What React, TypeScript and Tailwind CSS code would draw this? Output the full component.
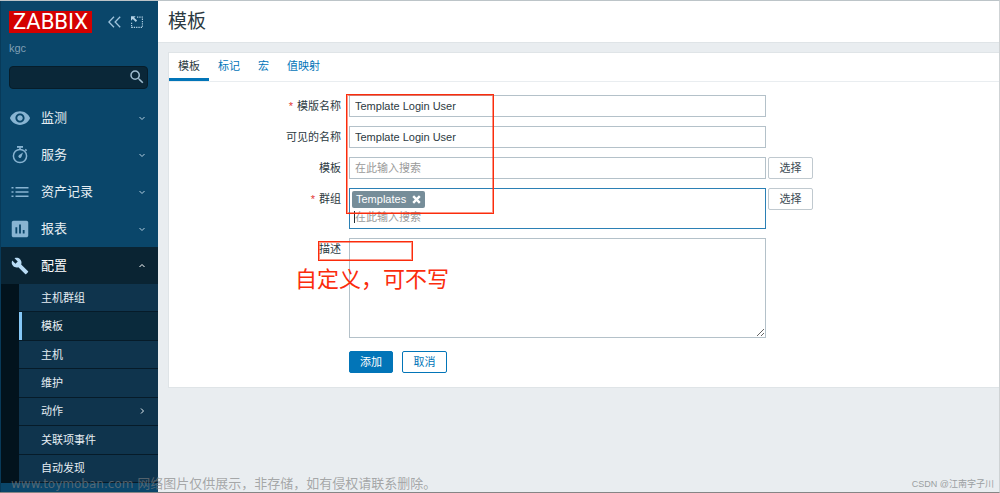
import { useState } from "react";
import type { ReactNode } from "react";
import { MdAssessment, MdBuild, MdSearch, MdVisibility } from "react-icons/md";

interface MenuEntry {
  label: string;
  icon: ReactNode;
}

const SUB_MENU = ["主机群组", "模板", "主机", "维护", "动作", "关联项事件", "自动发现"];

const TABS = ["模板", "标记", "宏", "值映射"];

function StopwatchIcon() {
  return (
    <svg viewBox="0 0 20 20" className="size-5" fill="none" stroke="currentColor">
      <path d="M7 1.9h6" strokeWidth="1.8" />
      <path d="M10 2.3v2M15.3 4.4l1.3 1.3" strokeWidth="1.6" />
      <circle cx="10" cy="11" r="6.6" strokeWidth="1.5" />
      <path d="M13 7.6 11.4 12a1.6 1.6 0 1 1-2.3-2.1z" fill="currentColor" stroke="none" />
    </svg>
  );
}

function ListIcon() {
  return (
    <svg viewBox="0 0 20 20" className="size-5" fill="currentColor">
      <path d="M1.5 5h2v1.6h-2zM1.5 9.2h2v1.6h-2zM1.5 13.4h2V15h-2zM5.5 5h13v1.6h-13zM5.5 9.2h13v1.6h-13zM5.5 13.4h13V15h-13z" />
    </svg>
  );
}

function Chevron({ className = "" }: { className?: string }) {
  return (
    <svg viewBox="0 0 8 8" className={`size-2 ${className}`} fill="none" stroke="currentColor" strokeWidth="1">
      <path d="M1.5 3 4 5.5 6.5 3" />
    </svg>
  );
}

const MAIN_MENU: MenuEntry[] = [
  { label: "监测", icon: <MdVisibility className="size-[22px]" /> },
  { label: "服务", icon: <StopwatchIcon /> },
  { label: "资产记录", icon: <ListIcon /> },
  { label: "报表", icon: <MdAssessment className="size-[22px]" /> },
];

function Sidebar() {
  const [current, setCurrent] = useState("模板");

  return (
    <aside className="flex w-[158px] shrink-0 flex-col overflow-hidden border-l border-[#083a59] bg-[#0a466a]">
      <div className="flex items-center pl-2 pt-[10px]">
        <a
          href="#home"
          className="flex h-[22px] w-[83px] items-center justify-center bg-[#d40000] font-['Roboto',sans-serif] text-[22px] leading-[22px] text-white"
        >
          ZABBIX
        </a>
        <button type="button" aria-label="收起" className="ml-4 text-[#9fc3dc]">
          <svg viewBox="0 0 13 12" className="h-3 w-[13px]" fill="none" stroke="currentColor" strokeWidth="1.3">
            <path d="M6 .7.9 6 6 11.3M12.2.7 7.1 6l5.1 5.3" />
          </svg>
        </button>
        <button type="button" aria-label="隐藏" className="ml-[10px] text-[#b4d2e6]">
          <svg viewBox="0 0 12 12" className="size-3" fill="none" stroke="currentColor">
            <path d="M6 1.1h5.4v10.3H.6V6" strokeWidth="1.1" strokeDasharray="1.3 1" />
            <path d="M0 .3h4.6L3.2 1.7l2.9 2.9-1.3 1.3-3-2.9L0 4.8z" fill="currentColor" stroke="none" />
          </svg>
        </button>
      </div>
      <p className="mt-[7px] pl-2 text-[11px] leading-4 text-[#7f9fb4]">kgc</p>
      <div className="relative ml-2 mr-[10px] mt-[10px]">
        <input
          type="text"
          aria-label="搜索"
          className="block h-[23px] w-full rounded-sm border border-[#061d2a] bg-[#0a2738] px-2 text-[11px] text-white outline-none"
        />
        <button type="button" aria-label="搜索" className="absolute right-[2px] top-[2px] text-[#9fbdd0]">
          <MdSearch className="size-[18px]" />
        </button>
      </div>
      <nav className="mt-[10px]">
        {MAIN_MENU.map((entry) => (
          <a key={entry.label} href="#menu" className="flex h-[37px] items-center pl-2 pr-3 text-[13px] text-[#e6eef3]">
            <span className="flex w-[22px] justify-center text-[#88b4d2]">{entry.icon}</span>
            <span className="ml-[10px] flex-1">{entry.label}</span>
            <Chevron className="text-[#b5cfdf]" />
          </a>
        ))}
        <a href="#menu" className="flex h-[37px] items-center bg-[#0a2433] pl-2 pr-3 text-[13px] text-white">
          <span className="flex w-[22px] justify-center text-[#b9dcf5]">
            <MdBuild className="size-[18px]" />
          </span>
          <span className="ml-[10px] flex-1">配置</span>
          <Chevron className="rotate-180" />
        </a>
        <ul className="grid min-h-[199px] auto-rows-fr bg-[#02131d] pl-[18px]">
          {SUB_MENU.map((label) => (
            <li key={label} className="flex border-b border-[#061b29]">
              <a
                href="#submenu"
                onClick={() => setCurrent(label)}
                className={`flex flex-1 items-center border-l-3 pl-[19px] pr-3 text-[11px] leading-4 text-[#e6eef3] ${
                  label === current ? "border-[#85c8f7] bg-[#0a2a3c]" : "border-[#0f344d] bg-[#0f344d]"
                }`}
              >
                <span className="flex-1">{label}</span>
                {label === "动作" && <Chevron className="-rotate-90" />}
              </a>
            </li>
          ))}
        </ul>
        <a href="#menu" aria-label="管理" className="flex h-[37px] items-center pl-2">
          <span className="flex w-[22px] justify-center">
            <span className="h-[19px] w-4 rounded-xs bg-[#88b4d2]" />
          </span>
        </a>
      </nav>
    </aside>
  );
}

interface FieldProps {
  label: string;
  htmlFor: string;
  required?: boolean;
  children: ReactNode;
}

function Field({ label, htmlFor, required, children }: FieldProps) {
  return (
    <div className="flex items-start gap-2">
      <label htmlFor={htmlFor} className="w-[172px] shrink-0 text-right leading-[22px]">
        {required && <span className="mr-1 text-[#e33734]">*</span>}
        {label}
      </label>
      {children}
    </div>
  );
}

function SelectButton() {
  return (
    <button
      type="button"
      className="-ml-[6px] h-[22px] w-[45px] shrink-0 rounded-xs border border-[#c0c9cf] bg-white text-[#3c4b54]"
    >
      选择
    </button>
  );
}

const inputClass =
  "block h-[22px] w-[417px] border border-[#b4c1c9] bg-white px-[5px] text-[11px] text-[#2c3a42] outline-none placeholder:text-[#9a9a9a]";

function TemplateForm() {
  const [name, setName] = useState("Template Login User");
  const [visibleName, setVisibleName] = useState("Template Login User");
  const [groups, setGroups] = useState(["Templates"]);

  return (
    <form className="relative flex flex-col gap-[9px] pb-[14px] pt-[13px]" onSubmit={(e) => e.preventDefault()}>
      <Field label="模版名称" htmlFor="name" required>
        <input id="name" value={name} onChange={(e) => setName(e.target.value)} className={inputClass} />
      </Field>
      <Field label="可见的名称" htmlFor="visible-name">
        <input
          id="visible-name"
          value={visibleName}
          onChange={(e) => setVisibleName(e.target.value)}
          className={inputClass}
        />
      </Field>
      <Field label="模板" htmlFor="templates">
        <input id="templates" placeholder="在此输入搜索" className={inputClass} />
        <SelectButton />
      </Field>
      <Field label="群组" htmlFor="groups" required>
        <div className="w-[417px] border border-[#2b80b5] bg-white p-[2px]">
          <div className="flex min-h-[17px] gap-1">
            {groups.map((group) => (
              <span
                key={group}
                className="flex h-[17px] items-center gap-[6px] rounded-xs bg-[#768d99] px-1 text-white"
              >
                {group}
                <button type="button" aria-label={`移除 ${group}`} onClick={() => setGroups([])}>
                  <svg viewBox="0 0 9 9" className="size-[9px]" stroke="currentColor" strokeWidth="2.4">
                    <path d="m1.2 1.2 6.6 6.6M7.8 1.2 1.2 7.8" />
                  </svg>
                </button>
              </span>
            ))}
          </div>
          <div className="flex h-[18px] items-center pl-[2px]">
            <span className="h-3 w-px bg-[#1f2c33]" />
            <input
              id="groups"
              placeholder="在此输入搜索"
              className="h-[18px] flex-1 text-[11px] outline-none placeholder:text-[#9a9a9a]"
            />
          </div>
        </div>
        <SelectButton />
      </Field>
      <Field label="描述" htmlFor="description">
        <textarea
          id="description"
          className="block h-[100px] w-[417px] border border-[#b4c1c9] bg-white p-1 text-[11px] outline-none"
        />
      </Field>
      <div className="mt-1 flex gap-[9px] pl-[180px]">
        <button type="submit" className="h-[22px] w-11 rounded-xs border border-[#0275b8] bg-[#0275b8] text-white">
          添加
        </button>
        <button type="button" className="h-[22px] w-[45px] rounded-xs border border-[#0275b8] bg-white text-[#0275b8]">
          取消
        </button>
      </div>

      {/* hand-made marks over the form */}
      <div className="pointer-events-none absolute left-[177px] top-[12px] h-[120px] w-[148px] border border-[#fb2c0c] ring-1 ring-inset ring-[#fb2c0c]/50" />
      <div className="pointer-events-none absolute left-[149px] top-[159px] h-[20px] w-[95px] border border-[#fb2c0c] ring-1 ring-inset ring-[#fb2c0c]/50" />
      <p className="pointer-events-none absolute left-[126px] top-[184px] text-[22px] leading-7 text-[#fb2c0c]">
        自定义，可不写
      </p>
    </form>
  );
}

export default function App() {
  const [tab, setTab] = useState("模板");

  return (
    <div className="relative flex h-screen overflow-hidden border-b border-r border-t border-b-[#858585] border-r-[#cfd3d5] border-t-[#bcc4c8] bg-[#e9edf0] font-['Liberation_Sans','Noto_Sans_CJK_SC',sans-serif] text-[11px] text-[#2c3a42]">
      <Sidebar />
      <main className="min-w-0 flex-1">
        <header className="border-b border-[#dfe4e7] bg-white pl-[10px]">
          <h1 className="text-[19px] leading-[41px]">模板</h1>
        </header>
        <section className="ml-[10px] mt-[9px] border-b border-l border-t border-[#dfe4e7] bg-white">
          <div className="flex border-b border-[#e9edf0]" role="tablist">
            {TABS.map((label) => (
              <button
                key={label}
                type="button"
                role="tab"
                aria-selected={tab === label}
                onClick={() => setTab(label)}
                className={`h-7 border-b-3 px-[9px] pt-[2px] ${
                  tab === label ? "border-[#0275b8] text-[#2c3a42]" : "border-transparent text-[#0275b8]"
                }`}
              >
                {label}
              </button>
            ))}
          </div>
          <TemplateForm />
        </section>
      </main>
      <p className="pointer-events-none absolute bottom-0 left-[11px] flex gap-1 whitespace-nowrap text-[13px] leading-4 text-[#7d7d7d]/65">
        <span className="font-['DejaVu_Sans',sans-serif] text-[12px]">www.toymoban.com</span>
        <span>网络图片仅供展示，非存储，如有侵权请联系删除。</span>
      </p>
      <p className="pointer-events-none absolute bottom-0 right-[5px] text-[9px] leading-4 text-[#9b9fa2]">
        CSDN @江南字子川
      </p>
    </div>
  );
}
